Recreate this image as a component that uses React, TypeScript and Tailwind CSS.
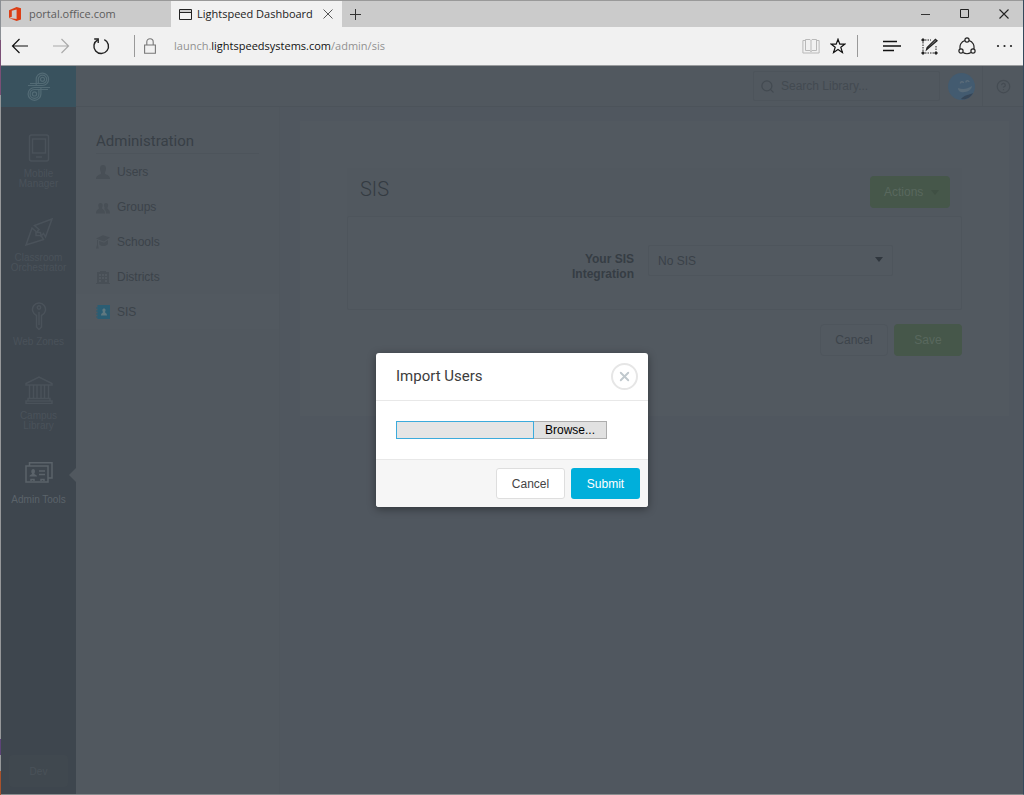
import { useRef, useState, type ReactNode } from "react";
import { CircleHelp, Search, X } from "lucide-react";
import clsx from "clsx";

const ARIAL = "font-['Liberation_Sans',Arial,sans-serif]";
const ROBOTO = "font-[Roboto,sans-serif]";
const SEGOE = "font-['Open_Sans','Noto_Sans',sans-serif]";

function OfficeIcon() {
  return (
    <svg width="12" height="14" viewBox="0 0 12 14" fill="#dc3e15" aria-hidden="true">
      <path d="M0 3.2 7.6 0 12 1.3v11.2L7.6 14 0 11l7.6.9V2.6L2.8 3.8v6L0 11z" />
    </svg>
  );
}

function WindowIcon() {
  return (
    <svg width="13" height="11" viewBox="0 0 13 11" fill="none" stroke="#222" aria-hidden="true">
      <path d="M.5.5h12v10H.5zM.5 3.5h12" />
      <path d="M1 2h11" strokeOpacity=".35" />
    </svg>
  );
}

function ReloadIcon() {
  return (
    <svg width="18" height="18" viewBox="0 0 18 18" fill="none" stroke="#222" strokeWidth="1.4" aria-hidden="true">
      <path d="M12.3 2.6A7.3 7.3 0 1 1 5.7 2.8" />
      <path d="M2.2 2h4v4" />
    </svg>
  );
}

function LockIcon() {
  return (
    <svg width="12" height="16" viewBox="0 0 12 16" fill="none" stroke="#777" strokeWidth="1.1" aria-hidden="true">
      <path d="M.6 7h10.8v8.3H.6zM2.8 7V4a3.2 3.2 0 0 1 6.4 0v3" />
    </svg>
  );
}

function BookIcon() {
  return (
    <svg width="18" height="16" viewBox="0 0 18 16" fill="none" stroke="#b9b9b9" aria-hidden="true">
      <path d="M9 2.5V14M3.500 1.500H8l1 1 1-1h4.500v11H10l-1 1-1-1H3.500z" />
      <path d="M3 2.500H.9v12.500h16.200V2.500H15" />
    </svg>
  );
}

function StarIcon() {
  return (
    <svg width="16" height="16" viewBox="0 0 16 16" fill="none" stroke="#111" strokeWidth="1.2" aria-hidden="true">
      <path d="m8 1.200 1.800 4.900h5.200l-4.200 3.200 1.600 5.200L8 11.400l-4.400 3.100 1.600-5.200L1 6.100h5.200z" />
    </svg>
  );
}

function HubIcon() {
  return (
    <svg width="18" height="13" viewBox="0 0 18 13" fill="none" stroke="#111" strokeWidth="1.3" aria-hidden="true">
      <path d="M0 1.500h14M0 6h18M0 10.500h11" />
    </svg>
  );
}

function NoteIcon() {
  return (
    <svg width="17" height="17" viewBox="0 0 17 17" fill="none" stroke="#222" aria-hidden="true">
      <path d="M4 2h6M2 4v9M15 8v5M4 15h9" strokeDasharray="1.5 1" />
      <path d="M1 1h2v2H1zM1 14h2v2H1zM14 14h2v2h-2z" fill="#222" />
      <path d="m7.200 10.300-1.700 1.500.6-2.300 8.300-8.300 1.700 1.500z" fill="#777" strokeWidth="1.2" />
    </svg>
  );
}

function ShareIcon() {
  return (
    <svg width="18" height="18" viewBox="0 0 18 18" fill="none" stroke="#222" strokeWidth="1.2" aria-hidden="true">
      <circle cx="9" cy="3" r="2.1" />
      <circle cx="3" cy="14" r="2.1" />
      <circle cx="15" cy="14" r="2.1" />
      <path d="M6.900 3.500A7 7 0 0 0 2.200 12M11.100 3.500a7 7 0 0 1 4.700 8.500M5 15.500a7.500 7.500 0 0 0 8 0" />
    </svg>
  );
}

function Logo() {
  return (
    <svg width="26" height="30" viewBox="0 0 26 30" fill="none" stroke="#536b75" strokeWidth="1.2" aria-hidden="true">
      <path d="M2 13.500h14.500a6.200 6.200 0 1 0-6.300-6.200v6.200M4 11.500h12.500a4.200 4.200 0 1 0-4.200-4.200v4.200" />
      <circle cx="16.5" cy="7.3" r="2" />
      <path d="M24 15.500H8.500a6.400 6.400 0 1 0 6.400 6.400v-6.400M22 17.500H8.500a4.400 4.400 0 1 0 4.400 4.400v-4.400" />
      <circle cx="8.5" cy="21.9" r="2.1" />
    </svg>
  );
}

type Module = { name: string; icon: ReactNode; active?: boolean };

const modules: Module[] = [
  {
    name: "Mobile Manager",
    icon: (
      <>
        <rect x="4.5" y="1" width="19" height="26" rx="2" />
        <path d="M7.500 5h13v14h-13zM11 23h6" />
      </>
    ),
  },
  {
    name: "Classroom Orchestrator",
    icon: (
      <>
        <path d="M27 1 9.500 7.500l4.500 4-2.500 3h4l.5 3.500 2.500-2.500 2 3.500z" />
        <path d="M1 27 7 10l4 3.500v4h4.500l1.500 1.500 1.500 2.500z" />
      </>
    ),
  },
  {
    name: "Web Zones",
    icon: (
      <>
        <path d="M11.500 13.500a6.500 6.500 0 1 1 5 0V25L14 27.500 11.500 25z" />
        <circle cx="14" cy="5.5" r="1.7" />
        <path d="M14 10v13" />
      </>
    ),
  },
  {
    name: "Campus Library",
    icon: <path d="M1 7.500 14 1l13 6.500V9H1zM3 22.500h22V25H3zM1 25h26v2.500H1zM4.500 9v13M8.500 9v13M12 9v13M16 9v13M19.500 9v13M23.500 9v13" />,
  },
  {
    name: "Admin Tools",
    active: true,
    icon: (
      <>
        <path d="M1 6h22v16H1zM4.500 5.500V2.800H27V18h-3.500M14 11h6M14 14.500h6M6 21v-1.500h3V21M16 21v-1.500h3V21" />
        <path d="M4.500 16.500c0-2 2.500-1.500 2.500-3-1.200-1.500-.8-4.500 1.200-4.500s2.300 3 1.100 4.500c0 1.500 2.700 1 2.700 3z" fill="currentColor" stroke="none" />
      </>
    ),
  },
];

type AdminLink = { name: string; icon: ReactNode; active?: boolean };

const adminLinks: AdminLink[] = [
  {
    name: "Users",
    icon: <path d="M7 0c2 0 3 1.400 3 3.500S9 7 8.800 8c0 2 5.200 1.500 5.200 6H0c0-4.500 5.200-4 5.200-6C5 7 4 5.600 4 3.500S5 0 7 0z" />,
  },
  {
    name: "Groups",
    icon: <path d="M4.500 3C6 3 6.700 4 6.600 5.500S6 7.700 6 8.300c0 1 3 1.200 3 5.200H0c0-4 3-4.200 3-5.200 0-.6-.7-1.300-.7-2.800S3 3 4.500 3zm5.500 0c1.500 0 2.200 1 2.100 2.500S11.400 7.700 11.400 8.300c0 1 2.600 1.200 2.600 5.200h-4c0-2.500-.7-3.500-1.800-4.200.8-1 .2-2-.2-3.300C7.800 4 8.500 3 10 3z" />,
  },
  {
    name: "Schools",
    icon: <path d="m0 3.500 7-3.300 7 2.300-6 4zM3 6l5 1.800L12 5v4c-1.500 2.200-6 3-8.500.8zM1 5h1v5l.6 3.500H0L1 10z" />,
  },
  {
    name: "Districts",
    icon: <path fillRule="evenodd" d="M4 1h6v1h3v11h1v1H0v-1h1V2h3zM3 4v2h2V4zm3 0v2h2V4zm3 0v2h2V4zM3 7v2h2V7zm3 0v2h2V7zm3 0v2h2V7zM3 10v2h2v-2zm6 0v2h2v-2z" />,
  },
  {
    name: "SIS",
    active: true,
    icon: (
      <>
        <path d="M1.500 0H14v14H1.500v-1.500H0v-1h1.500V9.500H0v-1h1.500v-2H0v-1h1.500v-2H0v-1h1.500z" />
        <path d="M8 3.500c2 0 1.800 2.500 1 3.500 0 1 2 1 2 3.500H5C5 8 7 8 7 7c-.8-1-1-3.500 1-3.500z" fill="#5f7880" />
      </>
    ),
  },
];

function BrowserChrome() {
  return (
    <header className={clsx("border-t border-[#999] bg-[#cbcbcb] text-[11px] text-[#222]", SEGOE)}>
      <div className="flex h-[26px] items-center">
        <button className="flex w-[170px] items-center gap-2 pl-2 text-[#5c5c5c]">
          <OfficeIcon />
          portal.office.com
        </button>
        <div className="flex h-full w-[171px] items-center bg-[#f1f1f1] pr-2 pl-2">
          <WindowIcon />
          <span className="ml-[5px] flex-1 whitespace-nowrap">Lightspeed Dashboard</span>
          <button aria-label="Close tab">
            <svg width="12" height="12" viewBox="0 0 12 12" stroke="#555" aria-hidden="true">
              <path d="m1.500 1.500 9 9m0-9-9 9" />
            </svg>
          </button>
        </div>
        <button className="ml-2" aria-label="New tab">
          <svg width="11" height="11" viewBox="0 0 11 11" stroke="#333" aria-hidden="true">
            <path d="M5.500 0v11M0 5.500h11" />
          </svg>
        </button>
        <div className="mr-3.5 ml-auto flex items-center gap-[29px]">
          <button aria-label="Minimize">
            <svg width="10" height="10" viewBox="0 0 10 10" stroke="#333" aria-hidden="true">
              <path d="M0 5.500h9" />
            </svg>
          </button>
          <button aria-label="Maximize">
            <svg width="10" height="10" viewBox="0 0 10 10" fill="none" stroke="#222" aria-hidden="true">
              <path d="M.5.5h8v8h-8z" />
            </svg>
          </button>
          <button aria-label="Close">
            <svg width="10" height="10" viewBox="0 0 10 10" stroke="#222" strokeWidth="1.1" aria-hidden="true">
              <path d="m.5.5 9 9m0-9-9 9" />
            </svg>
          </button>
        </div>
      </div>

      <div className="flex h-[39px] items-center border-b border-[#9a9c9e] bg-[#f1f1f1]">
        <button className="ml-2.5" aria-label="Back">
          <svg width="18" height="16" viewBox="0 0 18 16" fill="none" stroke="#111" strokeWidth="1.2" aria-hidden="true">
            <path d="M17 8H1.500M8.500 1l-7 7 7 7" />
          </svg>
        </button>
        <button className="ml-[23px]" aria-label="Forward">
          <svg width="18" height="16" viewBox="0 0 18 16" fill="none" stroke="#aaa" strokeWidth="1.2" aria-hidden="true">
            <path d="M1 8h15.500M9.500 1l7 7-7 7" />
          </svg>
        </button>
        <button className="ml-[22px]" aria-label="Refresh">
          <ReloadIcon />
        </button>
        <span className="mr-[9px] ml-6 h-[22px] w-px bg-[#999]" />
        <LockIcon />
        <span className="ml-[18px] flex-1 text-[#929292]">
          launch.<span className="text-[#111]">lightspeedsystems.com</span>/admin/sis
        </span>
        <button aria-label="Reading view">
          <BookIcon />
        </button>
        <button className="ml-2.5" aria-label="Add to favorites">
          <StarIcon />
        </button>
        <span className="ml-[11px] h-[22px] w-px bg-[#999]" />
        <button className="ml-[25px]" aria-label="Hub">
          <HubIcon />
        </button>
        <button className="ml-5" aria-label="Make a web note">
          <NoteIcon />
        </button>
        <button className="ml-5" aria-label="Share">
          <ShareIcon />
        </button>
        <button className="mr-2.5 ml-5" aria-label="More actions">
          <svg width="17" height="4" viewBox="0 0 17 4" fill="#222" aria-hidden="true">
            <circle cx="2" cy="2" r="1.1" />
            <circle cx="8.5" cy="2" r="1.1" />
            <circle cx="15" cy="2" r="1.1" />
          </svg>
        </button>
      </div>
    </header>
  );
}

function ModuleBar() {
  return (
    <nav className="flex w-[75px] shrink-0 flex-col bg-[#3e464e]">
      <a href="#home" aria-label="Home" className="mb-[27px] flex h-[41px] items-center justify-center bg-[#39525e]">
        <Logo />
      </a>
      {modules.map((m) => (
        <a
          key={m.name}
          href={`#${m.name}`}
          className={clsx(
            "relative mb-[29px] flex flex-col items-center gap-[7px] text-center text-[10px] leading-[10px]",
            m.active ? "text-[#5b636a]" : "text-[#4a525a]",
          )}
        >
          <svg width="28" height="28" viewBox="0 0 28 28" fill="none" stroke="currentColor" strokeWidth="1.5" aria-hidden="true">
            {m.icon}
          </svg>
          <span className="px-1">{m.name}</span>
          {m.active && (
            <span className="absolute top-2 right-0 border-y-[7px] border-r-[7px] border-y-transparent border-r-[#51585f]" />
          )}
        </a>
      ))}
      <button className="mx-2 mt-auto mb-[7px] h-8 rounded-sm bg-[#40484f] text-[10px] text-[#4a5259]">Dev</button>
    </nav>
  );
}

function TopBar() {
  return (
    <div className="flex h-[41px] items-center justify-end border-b border-[#4c535a] bg-[#51585f]">
      <label className="mr-2 flex h-[30px] w-[187px] items-center gap-1.5 rounded-xs border border-[#4d545b] px-1.5 text-[#434a51]">
        <Search size={15} className="shrink-0" />
        <input
          aria-label="Search Library"
          placeholder="Search Library..."
          className="w-full bg-transparent text-[12px] outline-none placeholder:text-[#434a51]"
        />
      </label>
      <button aria-label="Account">
        <svg width="27" height="27" viewBox="0 0 27 27" aria-hidden="true">
          <circle cx="13.5" cy="13.5" r="13.5" fill="#435b70" />
          <path d="M10 15c5 2 9 1 14-2 0 4-6 7-11 6-2-.5-3-2-3-4z" fill="#586a78" />
          <path d="M12.500 10.500a1.500 1.500 0 0 1 3-.5M18 9.500a1.500 1.500 0 0 1 3-.5" stroke="#5a6b79" strokeWidth="1.5" fill="none" />
          <path d="M13 26c3-4 8-4 12-6-2 4-7 7.500-12 6z" fill="#364657" />
        </svg>
      </button>
      <span className="ml-[7px] h-full w-px bg-[#4d545b]" />
      <button className="mr-3 ml-[13px] text-[#454c53]" aria-label="Help">
        <CircleHelp size={15} />
      </button>
    </div>
  );
}

function AdminMenu() {
  return (
    <aside className="w-[204px] shrink-0 border-r border-[#4f565d] bg-[#51585f] pl-5">
      <h2 className={clsx("mr-5 flex h-[47px] items-end border-b border-[#4d545b] pb-0.5 text-[15px] leading-5 text-[#383f46]", ROBOTO)}>
        Administration
      </h2>
      <ul>
        {adminLinks.map((l) => (
          <li key={l.name}>
            <a
              href={`#${l.name}`}
              className={clsx("-ml-5 flex h-[35px] items-center gap-[7px] pl-5 text-[12px] text-[#3c434a]", l.active && "bg-[#525960]")}
            >
              <svg
                width="14"
                height="14"
                viewBox="0 0 14 14"
                className={l.active ? "fill-[#2b5d73]" : "fill-[#484f56]"}
                aria-hidden="true"
              >
                {l.icon}
              </svg>
              {l.name}
            </a>
          </li>
        ))}
      </ul>
    </aside>
  );
}

function SisPanel() {
  return (
    <section className="mt-3.5 mr-3.5 ml-5 flex-1 self-start bg-[#525960] px-[47px] pt-[47px] pb-[60px]">
      <div className="flex h-12 items-center justify-between bg-[#51585f] pr-3 pl-[13px]">
        <h1 className={clsx("pb-1.5 text-[20px] font-light text-[#343b42]", ROBOTO)}>SIS</h1>
        <button className="flex h-8 w-20 items-center gap-2 rounded-sm bg-[#46574a] pl-3.5 text-[12px] text-[#59685e]">
          Actions
          <svg width="8" height="5" viewBox="0 0 8 5" fill="#405044" aria-hidden="true">
            <path d="M0 0h8L4 5z" />
          </svg>
        </button>
      </div>
      <div className="flex h-[94px] justify-end gap-3.5 rounded-xs border border-[#4e555c] pt-7 pr-[68px]">
        <label htmlFor="sis" className="w-20 pt-[7px] text-right text-[12px] leading-[15px] font-bold text-[#363d44]">
          Your SIS Integration
        </label>
        <div className="relative h-8 w-[245px]">
          <select
            id="sis"
            className="h-[31px] w-full appearance-none rounded-xs border border-[#4e555c] bg-transparent px-[9px] text-[12px] text-[#3a4148]"
          >
            <option>No SIS</option>
          </select>
          <svg width="8" height="5" viewBox="0 0 8 5" fill="#30373e" className="pointer-events-none absolute top-3 right-[10px]" aria-hidden="true">
            <path d="M0 0h8L4 5z" />
          </svg>
        </div>
      </div>
      <div className="mt-3.5 flex justify-end gap-1.5 text-[12px]">
        <button className="h-8 w-[68px] rounded-sm border border-[#4e555c] text-[#3d444b]">Cancel</button>
        <button className="h-8 w-[68px] rounded-sm bg-[#46574a] text-[#59685e]">Save</button>
      </div>
    </section>
  );
}

function ImportUsersModal({ onClose }: { onClose: () => void }) {
  const picker = useRef<HTMLInputElement>(null);
  const [fileName, setFileName] = useState("");

  return (
    <div className="absolute inset-0 flex items-center justify-center">
      <form
        role="dialog"
        aria-labelledby="import-title"
        onSubmit={(e) => e.preventDefault()}
        className="w-[272px] overflow-hidden rounded-[3px] bg-white shadow-[0_2px_8px_rgba(0,0,0,0.4)]"
      >
        <div className="flex h-12 items-center justify-between border-b border-[#e8e8e8] pr-2.5 pl-5">
          <h2 id="import-title" className={clsx("text-[15px] text-[#3c3c3c]", ROBOTO)}>
            Import Users
          </h2>
          <button
            type="button"
            onClick={onClose}
            aria-label="Close dialog"
            className="flex size-[27px] items-center justify-center rounded-full border-2 border-[#e6e6e6] text-[#c0c8cd]"
          >
            <X size={15} strokeWidth={3} />
          </button>
        </div>

        <div className="flex px-5 py-5">
          <input
            readOnly
            value={fileName}
            aria-label="Selected file"
            className="h-[18px] w-[138px] border border-[#3cabdc] bg-[#e5e5e5] px-1 text-[12px] outline-none"
          />
          <button
            type="button"
            onClick={() => picker.current?.click()}
            className="h-[18px] w-[73px] border border-l-0 border-[#adadad] bg-[#e1e1e1] text-[12px] leading-4 text-black"
          >
            Browse...
          </button>
          <input
            ref={picker}
            type="file"
            hidden
            onChange={(e) => setFileName(e.target.files?.[0]?.name ?? "")}
          />
        </div>

        <div className="flex h-12 items-center justify-end gap-1.5 border-t border-[#e8e8e8] bg-[#f6f6f6] pr-2 text-[12px]">
          <button type="button" onClick={onClose} className="h-[31px] w-[69px] rounded-[3px] border border-[#dedede] bg-white text-[#444]">
            Cancel
          </button>
          <button type="submit" className="h-[31px] w-[69px] rounded-[3px] bg-[#00afdb] text-white">
            Submit
          </button>
        </div>
      </form>
    </div>
  );
}

export default function App() {
  const [open, setOpen] = useState(true);

  return (
    <div className={clsx("flex min-h-screen bg-[#50575f]", ARIAL)}>
      {/* desktop showing past the window edge */}
      <div className="w-px shrink-0 bg-[linear-gradient(#8b8f94_0_5%,#7a4f76_5%_12%,#96989a_12%_93%,#5d4378_93%_95%,#96989a_95%_97%,#a8522c_97%)]" />
      <div className="flex min-w-0 flex-1 flex-col border-r border-b border-r-[#34495b] border-b-[#8b8d8f]">
        <BrowserChrome />
        <div className="relative flex flex-1">
          <ModuleBar />
          <main className="flex min-w-0 flex-1 flex-col">
            <TopBar />
            <div className="flex flex-1">
              <AdminMenu />
              <SisPanel />
            </div>
          </main>
          {open && <ImportUsersModal onClose={() => setOpen(false)} />}
        </div>
      </div>
    </div>
  );
}
